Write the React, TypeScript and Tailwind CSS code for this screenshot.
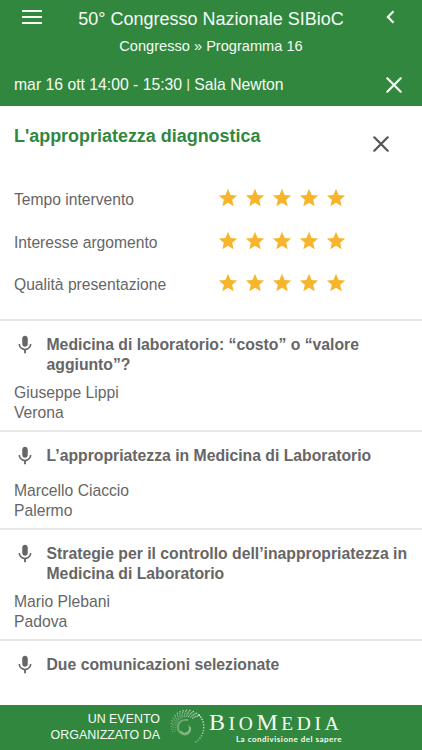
import { MdMic, MdStar } from 'react-icons/md';

const ratings = ['Tempo intervento', 'Interesse argomento', 'Qualità presentazione'];

const talks = [
  { title: 'Medicina di laboratorio: “costo” o “valore aggiunto”?', speaker: 'Giuseppe Lippi', city: 'Verona' },
  { title: 'L’appropriatezza in Medicina di Laboratorio', speaker: 'Marcello Ciaccio', city: 'Palermo' },
  { title: 'Strategie per il controllo dell’inappropriatezza in Medicina di Laboratorio', speaker: 'Mario Plebani', city: 'Padova' },
  { title: 'Due comunicazioni selezionate' },
];

const CloseIcon = ({ className }: { className: string }) => (
  <svg viewBox="0 0 16 16" className={className} fill="none" stroke="currentColor" strokeWidth="2.2" strokeLinecap="round">
    <path d="M1.300 1.300 14.700 14.700M14.700 1.300 1.300 14.700" />
  </svg>
);

const rad = (deg: number) => (deg * Math.PI) / 180;

// Rays of dots from lower left round to the top, brighter as they turn
const rays = Array.from({ length: 15 }).flatMap((_, ray) =>
  Array.from({ length: 5 }).map((_, i) => {
    const outer = 13.2 + ray * 0.36;
    const inner = 7.5 + ray * 0.3;
    const radius = inner + ((outer - inner) * i) / 4;
    const angle = rad(150 + ray * 11.5 + i * 2.5);
    return {
      x: 16 + radius * Math.cos(angle),
      y: 21 + radius * Math.sin(angle),
      r: 0.45 + i * 0.03 + ray * 0.018,
      o: 0.25 + (ray / 15) * 0.45 + (i === 4 ? 0.15 : 0),
    };
  })
);

// Single row of dots that closes the shell on the right
const tail = Array.from({ length: 12 }).map((_, i) => {
  const angle = rad(-42 + i * 8.8);
  return {
    x: 16 + 18.8 * Math.cos(angle),
    y: 21 + 18.3 * Math.sin(angle),
    r: 0.85 - i * 0.01,
    o: 0.85 - i * 0.025,
  };
});

const Spiral = () => (
  <svg viewBox="0 0 37 39" className="w-[37px] h-[39px] shrink-0" fill="none">
    {[...rays, ...tail].map((d, i) => (
      <circle key={i} cx={d.x} cy={d.y} r={d.r} fill="#effaf0" opacity={d.o} />
    ))}
    <path d="M18.500 14c-5-1-9.500 2-9.500 7.200 0 4.600 3.600 7.800 7.600 7.300 3.400-.4 5.400-3.500 4.700-6.500" stroke="#cbe6ce" strokeWidth="1.800" opacity="0.4" strokeLinecap="round" />
    <path d="M12 25.500c2.500 3 7.300 2 8.500-1.500.5-1.700.2-3-.5-4" stroke="#e4f3e5" strokeWidth="1.300" opacity="0.45" strokeLinecap="round" />
  </svg>
);

const Header = () => (
  <header className="h-[106px] shrink-0 bg-[#32873f] text-[#f4fbf3]">
    <div className="flex justify-between pl-[22px] pr-[27px]">
      <svg viewBox="0 0 20 14" className="mt-[10px] w-5 h-[14px] shrink-0" fill="currentColor">
        <path d="M0 0h20v2H0zM0 6h20v2H0zM0 12h20v2H0z" />
      </svg>
      <div className="flex w-[338px] flex-col items-center pr-[6px] text-center">
        <h1 className="mt-[7px] text-[18px] leading-6 whitespace-nowrap">50° Congresso Nazionale SIBioC</h1>
        <p className="mt-[5px] text-[14.6px] leading-5 whitespace-nowrap">Congresso » Programma 16</p>
      </div>
      <svg viewBox="0 0 9 14" className="mt-[10px] w-[9px] h-[14px] shrink-0" fill="none" stroke="currentColor" strokeWidth="2.2">
        <path d="M7.500 1.200 1.900 7l5.600 5.800" />
      </svg>
    </div>
    <div className="mt-[19px] flex items-center justify-between pl-[14px] pr-5">
      <p className="text-[15.75px] leading-5 whitespace-nowrap">
        mar 16 ott 14:00 - 15:30 <span className="align-[2px] text-[13px] leading-none">|</span> Sala Newton
      </p>
      <CloseIcon className="w-4 h-4" />
    </div>
  </header>
);

const App = () => {
  return (
    <div className="flex h-[750px] w-[422px] flex-col overflow-hidden bg-white font-['Liberation_Sans',Arial,sans-serif] text-[15.7px] leading-5 text-[#666]">
      <Header />

      <main className="flex-1 overflow-hidden">
        <section className="h-[213px]">
          <div className="flex justify-between pl-[14px] pr-[33px] pt-5">
            <h2 className="text-[17.95px] leading-5 font-bold text-[#32873f]">L'appropriatezza diagnostica</h2>
            <CloseIcon className="mt-[10px] w-4 h-4 text-[#555]" />
          </div>
          <div className="mt-[35px] pl-[14px]">
            {ratings.map((label) => (
              <div key={label} className="flex h-[42.7px] items-start">
                <span className="w-[203px] pt-[3px] text-[15.65px]">{label}</span>
                <div className="flex gap-[5px] text-[#f7b52c]">
                  {[1, 2, 3, 4, 5].map((n) => (
                    <MdStar key={n} size={22} />
                  ))}
                </div>
              </div>
            ))}
          </div>
        </section>

        {talks.map((talk) => (
          <article key={talk.title} className="border-t-2 border-[#e8e8e8] pt-[14px] pb-[7px]">
            <div className="flex min-h-[27px] pl-[14px]">
              <MdMic size={22} className="-mt-px shrink-0" />
              <h3 className="ml-[10.5px] w-[370px] text-[15.75px] font-bold">{talk.title}</h3>
            </div>
            {talk.speaker && (
              <div className="mt-2 pl-[14px]">
                <p>{talk.speaker}</p>
                <p>{talk.city}</p>
              </div>
            )}
          </article>
        ))}
      </main>

      <footer className="flex h-[45px] shrink-0 bg-[#32873f] pl-[40px] text-[#f4fbf3]">
        <p className="w-[120px] pt-[7px] text-right text-[12.45px] leading-[15.5px] whitespace-nowrap">
          UN EVENTO
          <br />
          ORGANIZZATO DA
        </p>
        <div className="ml-[9px] flex pt-px">
          <Spiral />
          <div className="ml-[3px] flex w-[133px] flex-col whitespace-nowrap">
            <div className="mt-[4px] font-['Liberation_Serif',serif] text-[19.5px] leading-[24px] tracking-[3.6px]">
              <span className="text-[24px]">B</span>IO<span className="text-[24px]">M</span>EDIA
            </div>
            <div className="-mt-px text-right font-['Lato',sans-serif] text-[8px] leading-[9px] font-bold tracking-[0.5px]">La condivisione del sapere</div>
          </div>
        </div>
      </footer>
    </div>
  );
};

export default App;
